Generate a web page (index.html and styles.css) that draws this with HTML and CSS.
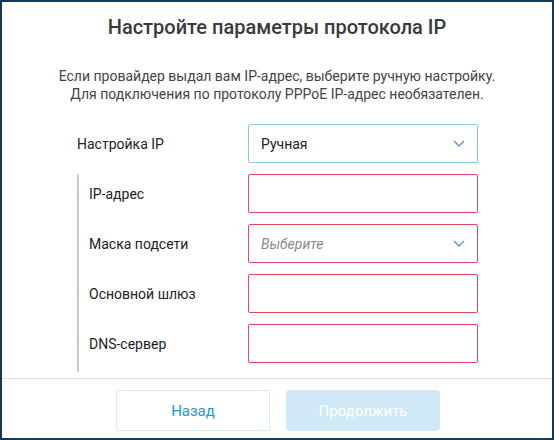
FILE: index.html
```html
<!DOCTYPE html>
<html lang="ru">
<head>
<meta charset="utf-8">
<link rel="stylesheet" href="styles.css">
</head>
<body>
<div class="frame">
  <div class="content">
    <h1 class="title">Настройте параметры протокола IP</h1>
    <p class="subtitle">Если провайдер выдал вам IP-адрес, выберите ручную настройку.<br>Для подключения по протоколу PPPoE IP-адрес необязателен.</p>
    <div class="form">
      <div class="row">
        <div class="label">Настройка IP</div>
        <div class="field select select-ok">
          <span class="value">Ручная</span>
          <svg class="chev" width="12" height="7" viewBox="0 0 12 7"><polyline points="1,1 6,6 11,1" fill="none" stroke="#5b8fcb" stroke-width="1.3"/></svg>
        </div>
      </div>
      <div class="group">
        <div class="row">
          <div class="label sub">IP-адрес</div>
          <div class="field error"></div>
        </div>
        <div class="row">
          <div class="label sub">Маска подсети</div>
          <div class="field select error">
            <span class="placeholder">Выберите</span>
            <svg class="chev" width="12" height="7" viewBox="0 0 12 7"><polyline points="1,1 6,6 11,1" fill="none" stroke="#5b8fcb" stroke-width="1.3"/></svg>
          </div>
        </div>
        <div class="row">
          <div class="label sub">Основной шлюз</div>
          <div class="field error"></div>
        </div>
        <div class="row">
          <div class="label sub">DNS-сервер</div>
          <div class="field error"></div>
        </div>
      </div>
    </div>
  </div>
  <div class="footer">
    <button class="btn btn-back">Назад</button>
    <button class="btn btn-next">Продолжить</button>
  </div>
</div>
</body>
</html>
```
FILE: styles.css
```css
* { box-sizing: border-box; }
html, body { margin: 0; padding: 0; }
body {
  font-family: Roboto, "Liberation Sans", sans-serif;
  background: #fff;
}
.frame {
  width: 554px;
  height: 440px;
  border: 2px solid #133a52;
  background: #fff;
  display: flex;
  flex-direction: column;
}
.content {
  flex: 1;
  padding-top: 12px;
}
.title {
  margin: 0;
  text-align: center;
  font-size: 20px;
  line-height: 26px;
  font-weight: 500;
  color: #3a3a3a;
}
.subtitle {
  margin: 27px 0 0;
  text-align: center;
  font-size: 14px;
  line-height: 18px;
  color: #444;
}
.form {
  margin: 21px 0 0 75px;
  width: 401px;
}
.row {
  display: flex;
  align-items: center;
  height: 39px;
}
.label {
  width: 171px;
  font-size: 14px;
  color: #222;
}
.label.sub { width: 159px; }
.group {
  margin-top: 11px;
  border-left: 2px solid #cccccc;
  padding: 0 0 9px 10px;
  display: flex;
  flex-direction: column;
  gap: 11px;
}
.field {
  width: 230px;
  height: 39px;
  border: 1px solid #e5475a;
  border-radius: 2px;
  background: #fff;
}
.select {
  display: flex;
  align-items: center;
  justify-content: space-between;
  padding: 0 12px 0 12px;
  font-size: 14px;
}
.select-ok { border-color: #86c8e6; }
.value { color: #222; }
.placeholder { color: #8a8a8a; font-style: italic; }
.footer {
  height: 60px;
  border-top: 1px solid #d3e5f1;
  display: flex;
  justify-content: center;
  gap: 16px;
  padding: 11px 0 0 2px;
}
.btn {
  width: 154px;
  height: 41px;
  font-family: Roboto, "Liberation Sans", sans-serif;
  font-size: 15px;
  border-radius: 2px;
  cursor: pointer;
}
.btn-back {
  background: #fff;
  border: 1px solid #d3e9f4;
  color: #1a9ad6;
}
.btn-next {
  background: #cfe9f6;
  border: 1px solid #cfe9f6;
  color: #fff;
  border-radius: 3px;
}
```
